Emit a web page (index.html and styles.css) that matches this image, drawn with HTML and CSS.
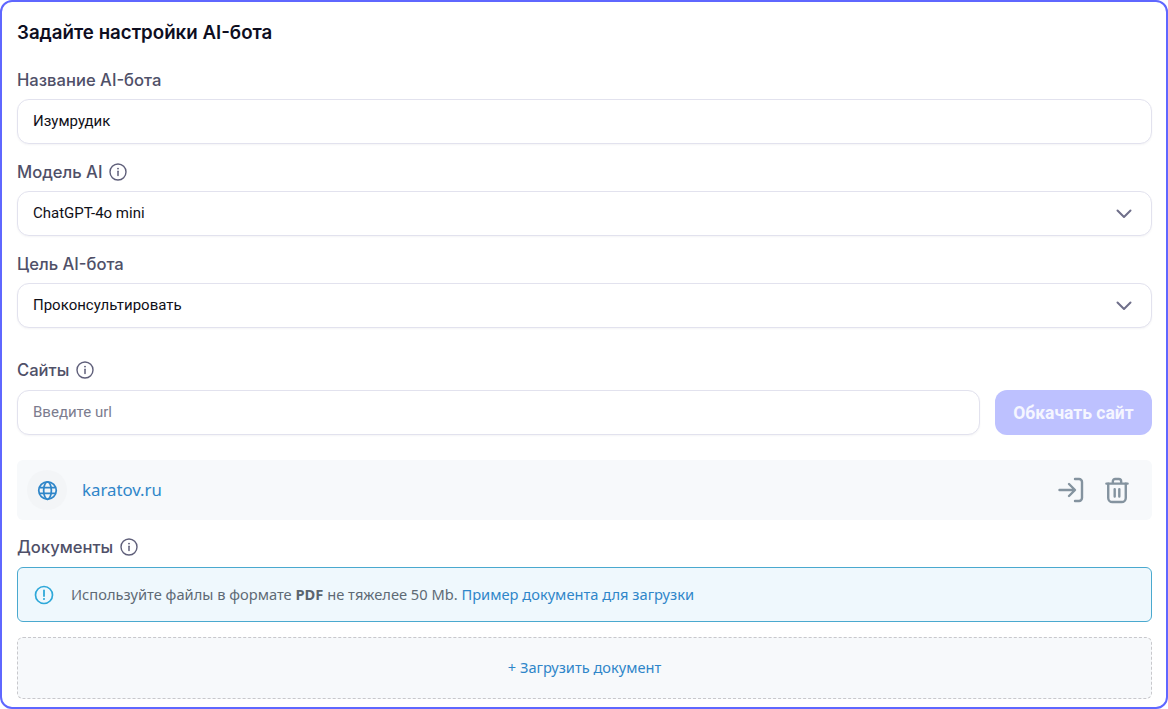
FILE: index.html
```html
<!DOCTYPE html>
<html lang="ru">
<head>
<meta charset="utf-8">
<title>Настройки AI-бота</title>
<link rel="stylesheet" href="styles.css">
</head>
<body>
<main class="card">
  <h1 class="title">Задайте настройки AI-бота</h1>

  <div class="label label-name">Название AI-бота</div>
  <div class="field"><span class="value">Изумрудик</span></div>

  <div class="label label-model">Модель AI
    <svg class="info" viewBox="0 0 18 18" fill="none"><circle cx="9" cy="9" r="8" stroke="currentColor" stroke-width="1.4"/><path d="M9 8.2v4.2" stroke="currentColor" stroke-width="1.5" stroke-linecap="round"/><circle cx="9" cy="5.6" r=".95" fill="currentColor"/></svg>
  </div>
  <div class="field select"><span class="value">ChatGPT-4o mini</span>
    <svg class="chevron" viewBox="0 0 16 10" fill="none"><path d="M1.5 1.5 8 8l6.5-6.5" stroke="currentColor" stroke-width="2" stroke-linecap="round" stroke-linejoin="round"/></svg>
  </div>

  <div class="label label-model">Цель AI-бота</div>
  <div class="field select"><span class="value">Проконсультировать</span>
    <svg class="chevron" viewBox="0 0 16 10" fill="none"><path d="M1.5 1.5 8 8l6.5-6.5" stroke="currentColor" stroke-width="2" stroke-linecap="round" stroke-linejoin="round"/></svg>
  </div>

  <div class="label label-sites">Сайты
    <svg class="info" viewBox="0 0 18 18" fill="none"><circle cx="9" cy="9" r="8" stroke="currentColor" stroke-width="1.4"/><path d="M9 8.2v4.2" stroke="currentColor" stroke-width="1.5" stroke-linecap="round"/><circle cx="9" cy="5.6" r=".95" fill="currentColor"/></svg>
  </div>
  <div class="url-row">
    <div class="field grow"><span class="value placeholder">Введите url</span></div>
    <button class="btn" type="button">Обкачать сайт</button>
  </div>

  <div class="site">
    <span class="site-badge">
      <svg class="globe" viewBox="0 0 24 24" fill="none" stroke="currentColor" stroke-width="2"><circle cx="12" cy="12" r="10"/><ellipse cx="12" cy="12" rx="4.4" ry="10"/><path d="M2.600 8.800h18.800M2.600 15.200h18.800"/></svg>
    </span>
    <a class="site-link">karatov.ru</a>
    <svg class="act act-login" viewBox="0 0 26 26" fill="none" stroke="currentColor" stroke-width="2.4" stroke-linecap="round" stroke-linejoin="round"><path d="M1.500 13h15M11 7l6 6-6 6"/><path d="M17 2h4a3 3 0 0 1 3 3v16a3 3 0 0 1-3 3h-4"/></svg>
    <svg class="act act-trash" viewBox="0 0 26 28" fill="none" stroke="currentColor" stroke-width="2.600" stroke-linecap="round" stroke-linejoin="round"><path d="M1.500 6.500h23M8.500 6.500V4a2.500 2.500 0 0 1 2.500-2.500h4A2.500 2.500 0 0 1 17.500 4v2.500"/><path d="M3.500 6.500V22a4.500 4.500 0 0 0 4.500 4.500h10a4.500 4.500 0 0 0 4.500-4.500V6.500"/><path d="M10.500 12.500v8M15.500 12.500v8"/></svg>
  </div>

  <div class="label label-docs">Документы
    <svg class="info" viewBox="0 0 18 18" fill="none"><circle cx="9" cy="9" r="8" stroke="currentColor" stroke-width="1.4"/><path d="M9 8.2v4.2" stroke="currentColor" stroke-width="1.5" stroke-linecap="round"/><circle cx="9" cy="5.6" r=".95" fill="currentColor"/></svg>
  </div>
  <div class="alert">
    <svg class="alert-icon" viewBox="0 0 20 20" fill="none"><circle cx="10" cy="10" r="8.500" stroke="currentColor" stroke-width="1.700"/><path d="M10 5.500v5.500" stroke="currentColor" stroke-width="1.800" stroke-linecap="round"/><circle cx="10" cy="14" r="1.050" fill="currentColor"/></svg>
    <p class="alert-text">Используйте файлы в формате <b>PDF</b> не тяжелее 50 Mb. <a class="doc-link">Пример документа для загрузки</a></p>
  </div>
  <div class="drop"><a class="drop-link">+ Загрузить документ</a></div>
</main>
</body>
</html>
```
FILE: styles.css
```css
* { box-sizing: border-box; }
html, body { margin: 0; padding: 0; background: #fff; }
.card {
  width: 1168px;
  height: 709px;
  border: 2px solid #5f67ff;
  border-radius: 12px;
  padding: 0 14px 0 15px;
  display: flex;
  flex-direction: column;
  font-family: Inter, sans-serif;
  overflow: hidden;
}
.title {
  margin: 19px 0 0;
  font-size: 18.700px;
  line-height: 24px;
  font-weight: 600;
  color: #0e0e1f;
}
.label {
  display: flex;
  align-items: center;
  gap: 7px;
  height: 20px;
  font-size: 16.600px;
  line-height: 20px;
  font-weight: 500;
  color: #4f5068;
}
.label-name { margin-top: 25px; margin-bottom: 9px; }
.label-model { margin-top: 18px; margin-bottom: 9px; }
.label-sites { margin-top: 32px; margin-bottom: 10px; }
.label-docs { margin-top: 17px; margin-bottom: 10px; }
.info { width: 18px; height: 18px; color: #5f5f7a; flex: none; }
.field {
  height: 45px;
  flex: none;
  display: flex;
  align-items: center;
  justify-content: space-between;
  padding: 0 19px 0 15px;
  background: #fff;
  border: 1px solid #e2e2ee;
  border-radius: 12px;
  box-shadow: 0 1px 2px rgba(40, 40, 80, .05);
}
.value {
  font-family: Roboto, sans-serif;
  font-size: 15px;
  line-height: 20px;
  margin-bottom: 2px;
  color: #101018;
}
.placeholder { color: #7c7c8e; }
.chevron { width: 16px; height: 10px; color: #6f6f8a; }
.url-row { display: flex; gap: 15px; flex: none; }
.grow { flex: 1; }
.btn {
  width: 157px;
  height: 45px;
  flex: none;
  border: 0;
  border-radius: 12px;
  background: #bdc1ff;
  color: #f5f6ff;
  font-family: Roboto, sans-serif;
  font-size: 17.500px;
  font-weight: 700;
  padding: 0;
}
.site {
  margin-top: 25px;
  height: 60px;
  flex: none;
  display: flex;
  align-items: center;
  background: #f7f9fb;
  border-radius: 6px;
  padding: 0 23px 0 10px;
}
.site-badge {
  width: 40px;
  height: 40px;
  border-radius: 50%;
  background: #f3f5f7;
  display: flex;
  align-items: center;
  justify-content: center;
  flex: none;
}
.globe { width: 21px; height: 21px; color: #2f86c9; }
.site-link {
  margin-left: 15px;
  margin-right: auto;
  margin-bottom: 2px;
  font-family: "Noto Sans", sans-serif;
  font-size: 16.800px;
  color: #2f86c9;
}
.act { color: #84939f; flex: none; }
.act-login { width: 26px; height: 26px; }
.act-trash { width: 24px; height: 27px; margin-left: 21px; }
.alert {
  height: 55px;
  flex: none;
  display: flex;
  align-items: center;
  gap: 17px;
  padding: 0 16px;
  background: #eff8fd;
  border: 1px solid #4aa9cf;
  border-radius: 6px;
}
.alert-icon { width: 20px; height: 20px; color: #2ea8d9; flex: none; }
.alert-text {
  margin: 0 0 2px;
  font-family: "Noto Sans", sans-serif;
  font-size: 14.660px;
  color: #5e6a75;
}
.alert-text b { font-weight: 700; color: #5a6570; }
.doc-link { color: #2f86c9; }
.drop {
  margin-top: 15px;
  height: 62px;
  flex: none;
  display: flex;
  align-items: center;
  justify-content: center;
  background: #f7f9fb;
  border: 1px dashed #c8c8cc;
  border-radius: 6px;
}
.drop-link {
  margin-bottom: 2px;
  font-family: "Noto Sans", sans-serif;
  font-size: 14.600px;
  color: #2f86c9;
}
```
